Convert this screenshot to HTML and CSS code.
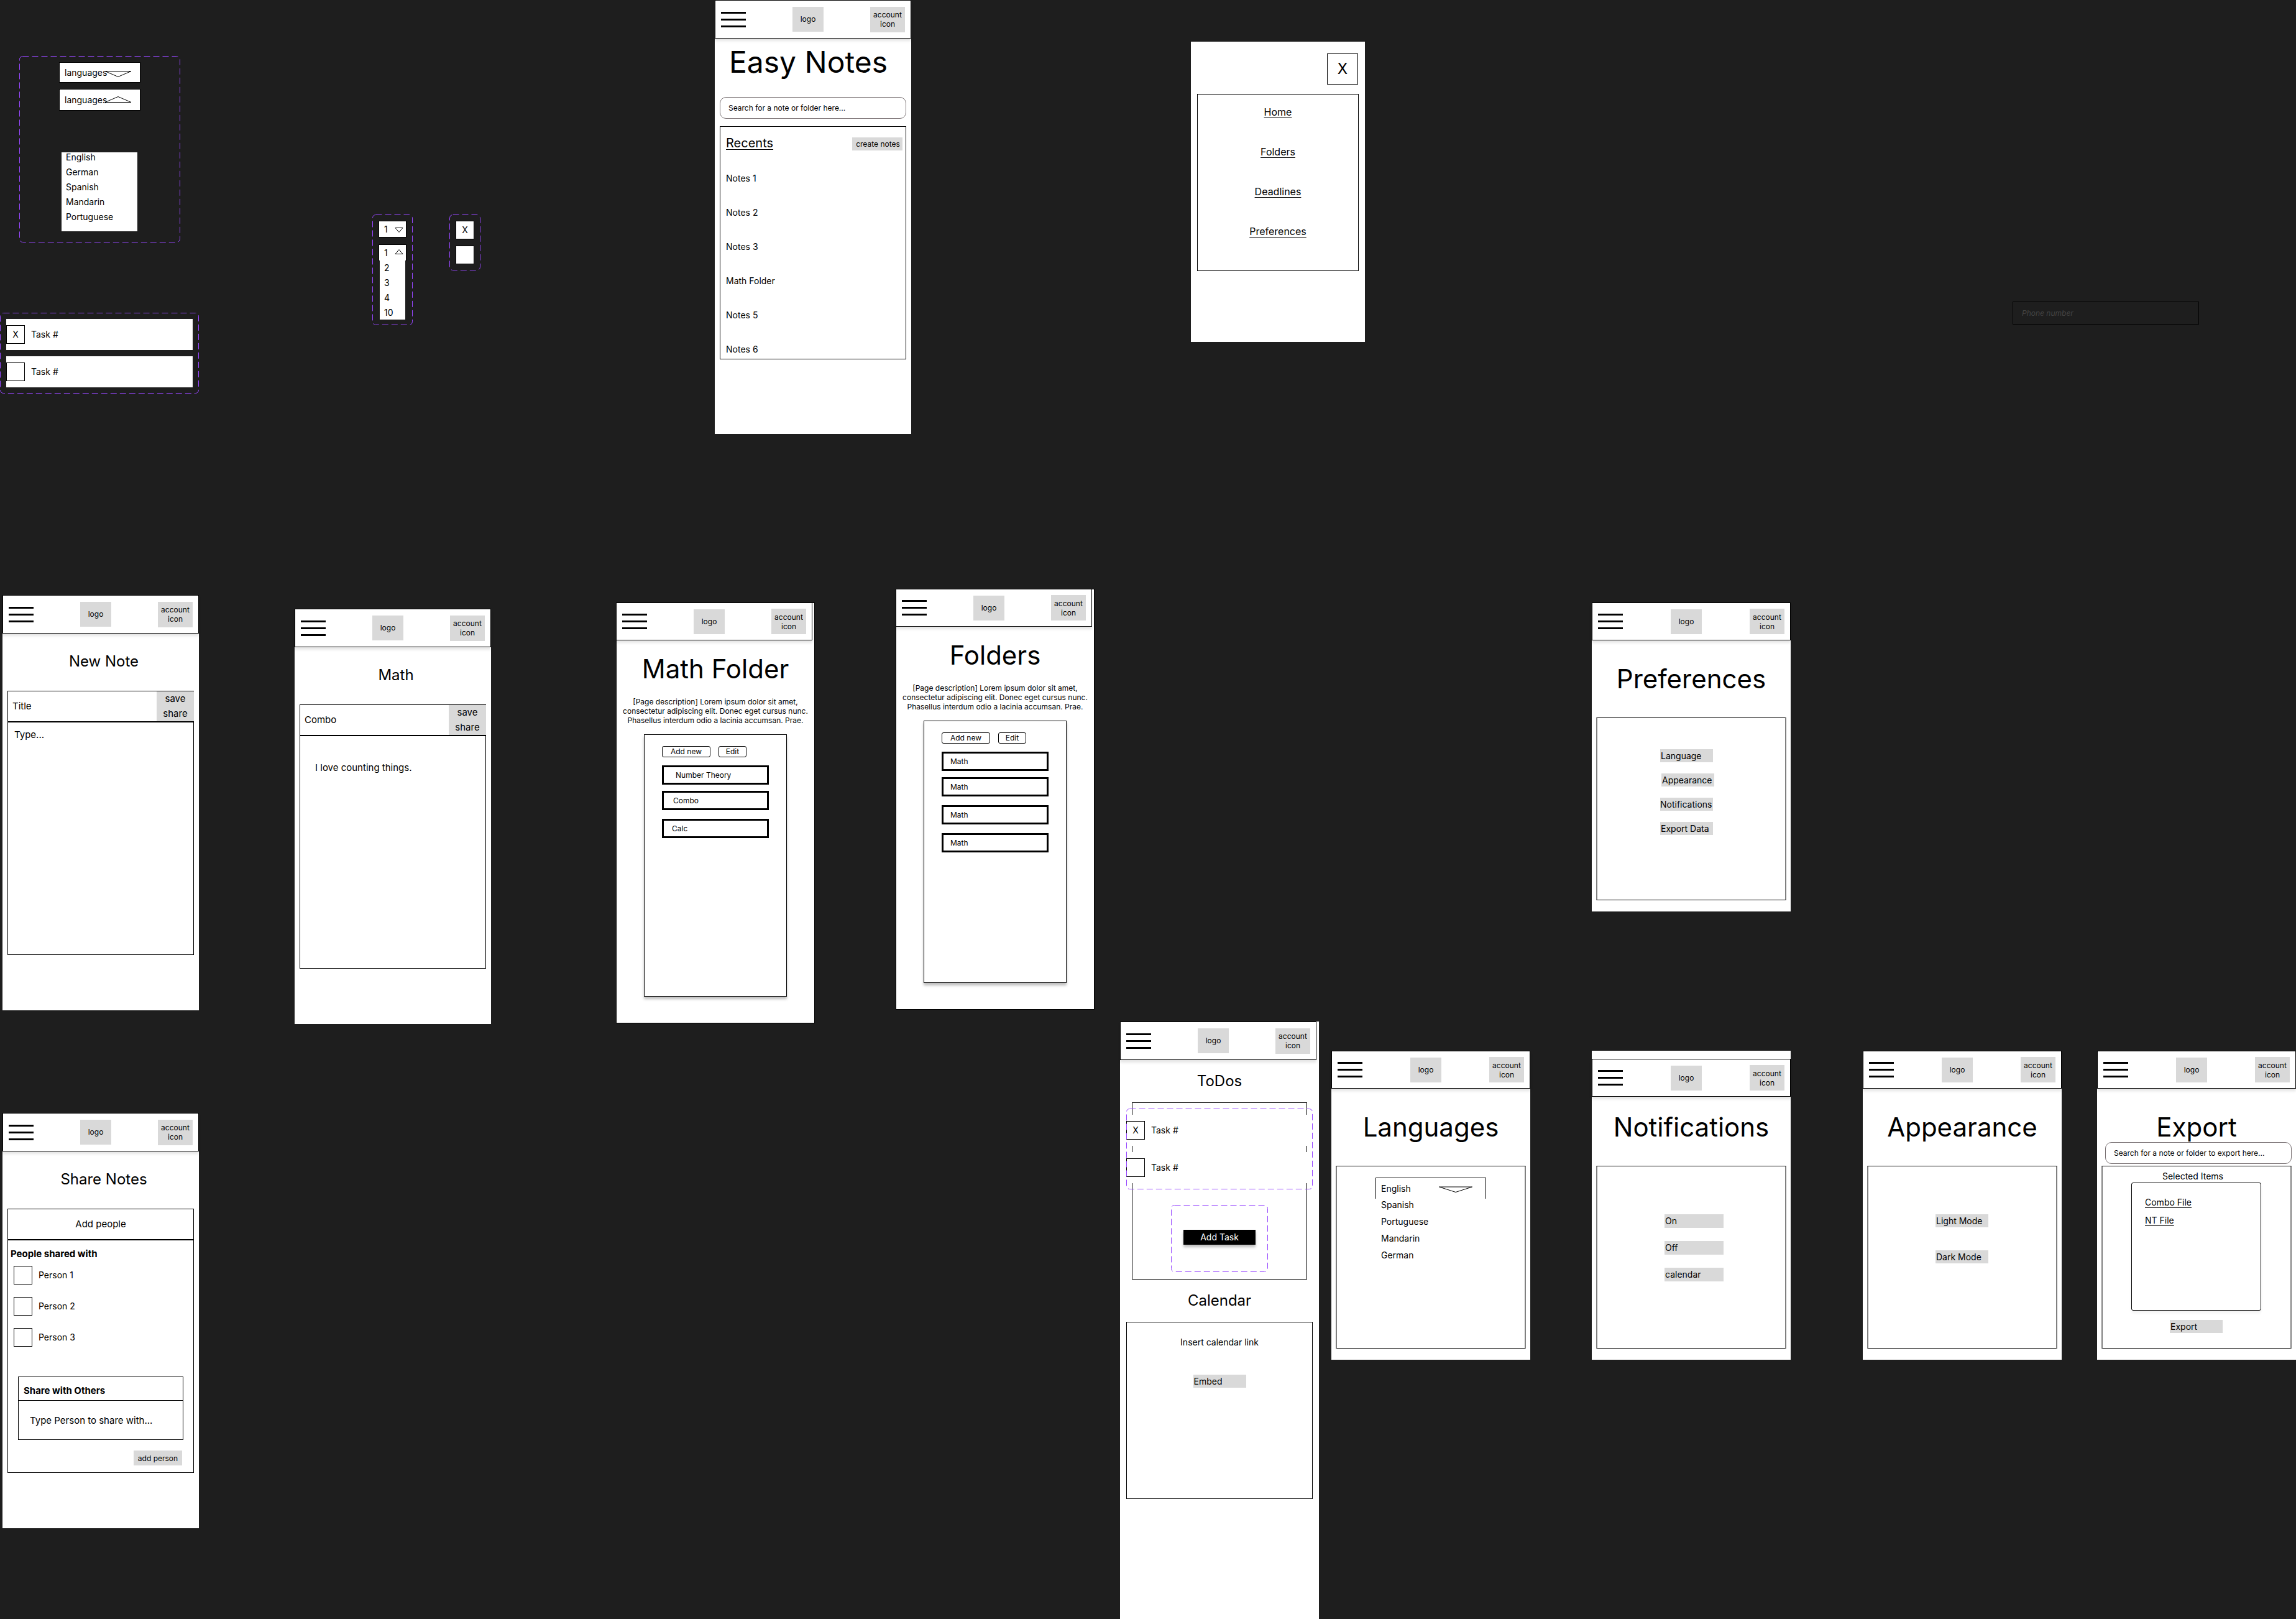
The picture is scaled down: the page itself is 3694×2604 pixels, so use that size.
FILE: index.html
```html
<!DOCTYPE html>
<html lang="en">
<head>
<meta charset="utf-8">
<title>Easy Notes wireframes</title>
<link rel="stylesheet" href="styles.css">
</head>
<body>
<svg class="defs" aria-hidden="true">
  <symbol id="menu" viewBox="0 0 40 25"><path d="M0 0h40v3H0zM0 11h40v3H0zM0 22h40v3H0z"/></symbol>
</svg>
<main class="canvas">

  <section class="component language-set">
    <svg class="dash"><rect rx="5"/></svg>
    <div class="dropdown">
      <select aria-label="Languages, closed"><option>languages</option></select>
      <svg class="caret wide" viewBox="0 0 42 10"><path d="M0 .5H42L21 9.500Z"/></svg>
    </div>
    <div class="dropdown tall">
      <select aria-label="Languages, open"><option>languages</option></select>
      <svg class="caret wide" viewBox="0 0 42 10"><path d="M0 9.500H42L21 .5Z"/></svg>
    </div>
    <ul class="options">
      <li>English</li><li>German</li><li>Spanish</li><li>Mandarin</li><li>Portuguese</li>
    </ul>
  </section>

  <section class="component task-set task-master">
    <svg class="dash"><rect rx="5"/></svg>
    <label class="task"><span class="check"><input type="checkbox" checked><span>X</span></span>Task #</label>
    <label class="task"><span class="check"><input type="checkbox"></span>Task #</label>
  </section>

  <section class="component number-set">
    <svg class="dash"><rect rx="5"/></svg>
    <div class="dropdown">
      <select aria-label="Count, closed"><option>1</option></select>
      <svg class="caret small" viewBox="0 0 14 8"><path d="M1 .5H13L7 7.500Z"/></svg>
    </div>
    <div class="dropdown">
      <select aria-label="Count, open"><option>1</option></select>
      <svg class="caret small raised" viewBox="0 0 14 8"><path d="M1 7.500H13L7 .5Z"/></svg>
    </div>
    <ul class="options"><li>2</li><li>3</li><li>4</li><li>10</li></ul>
  </section>

  <section class="component check-set">
    <svg class="dash"><rect rx="5"/></svg>
    <label class="check"><input type="checkbox" checked aria-label="Checked"><span>X</span></label>
    <label class="check"><input type="checkbox" aria-label="Unchecked"></label>
  </section>

  <article class="frame home">
    <header class="topbar">
      <button class="menu" aria-label="Menu"><svg><use href="#menu"/></svg></button>
      <a class="logo" href="#">logo</a>
      <button class="account">account icon</button>
    </header>
    <h1 class="display">Easy Notes</h1>
    <input class="search" type="text" aria-label="Search" placeholder="Search for a note or folder here...">
    <div class="panel">
      <div class="recents-head"><h2>Recents</h2><button class="chip">create notes</button></div>
      <ul class="recents">
        <li>Notes 1</li><li>Notes 2</li><li>Notes 3</li><li>Math Folder</li><li>Notes 5</li><li>Notes 6</li>
      </ul>
    </div>
  </article>

  <article class="frame nav-menu">
    <button class="close">X</button>
    <nav class="panel">
      <a href="#">Home</a><a href="#">Folders</a><a href="#">Deadlines</a><a href="#">Preferences</a>
    </nav>
  </article>

  <input class="phone" type="text" aria-label="Phone number" placeholder="Phone number">

  <article class="frame note new-note">
    <header class="topbar">
      <button class="menu" aria-label="Menu"><svg><use href="#menu"/></svg></button>
      <a class="logo" href="#">logo</a>
      <button class="account">account icon</button>
    </header>
    <h1 class="heading">New Note</h1>
    <div class="note-title">
      <input type="text" aria-label="Title" placeholder="Title">
      <div class="actions"><button>save</button><button>share</button></div>
    </div>
    <textarea class="note-body" aria-label="Note" placeholder="Type..."></textarea>
  </article>

  <article class="frame note math-note">
    <header class="topbar">
      <button class="menu" aria-label="Menu"><svg><use href="#menu"/></svg></button>
      <a class="logo" href="#">logo</a>
      <button class="account">account icon</button>
    </header>
    <h1 class="heading">Math</h1>
    <div class="note-title">
      <input type="text" aria-label="Title" value="Combo">
      <div class="actions"><button>save</button><button>share</button></div>
    </div>
    <textarea class="note-body filled" aria-label="Note">I love counting things.</textarea>
  </article>

  <article class="frame folder math-folder">
    <header class="topbar low narrow">
      <button class="menu" aria-label="Menu"><svg><use href="#menu"/></svg></button>
      <a class="logo" href="#">logo</a>
      <button class="account">account icon</button>
    </header>
    <h1 class="title">Math Folder</h1>
    <p class="description">[Page description] Lorem ipsum dolor sit amet, consectetur adipiscing elit. Donec eget cursus nunc. Phasellus interdum odio a lacinia accumsan. Prae.</p>
    <div class="panel raised-panel">
      <div class="tools"><button class="add">Add new</button><button class="edit">Edit</button></div>
      <div class="entries">
        <button class="indent-l">Number Theory</button>
        <button class="indent-m">Combo</button>
        <button class="indent-s">Calc</button>
      </div>
    </div>
  </article>

  <article class="frame folder folders">
    <header class="topbar low narrow">
      <button class="menu" aria-label="Menu"><svg><use href="#menu"/></svg></button>
      <a class="logo" href="#">logo</a>
      <button class="account">account icon</button>
    </header>
    <h1 class="title">Folders</h1>
    <p class="description">[Page description] Lorem ipsum dolor sit amet, consectetur adipiscing elit. Donec eget cursus nunc. Phasellus interdum odio a lacinia accumsan. Prae.</p>
    <div class="panel raised-panel">
      <div class="tools"><button class="add">Add new</button><button class="edit">Edit</button></div>
      <div class="entries">
        <button>Math</button><button>Math</button><button>Math</button><button>Math</button>
      </div>
    </div>
  </article>

  <article class="frame settings preferences">
    <header class="topbar low">
      <button class="menu" aria-label="Menu"><svg><use href="#menu"/></svg></button>
      <a class="logo" href="#">logo</a>
      <button class="account">account icon</button>
    </header>
    <h1 class="title">Preferences</h1>
    <div class="panel soft">
      <button class="option">Language</button>
      <button class="option inset">Appearance</button>
      <button class="option flush">Notifications</button>
      <button class="option">Export Data</button>
    </div>
  </article>

  <article class="frame note share-notes">
    <header class="topbar">
      <button class="menu" aria-label="Menu"><svg><use href="#menu"/></svg></button>
      <a class="logo" href="#">logo</a>
      <button class="account">account icon</button>
    </header>
    <h1 class="heading">Share Notes</h1>
    <h2 class="add-people">Add people</h2>
    <div class="people">
      <h3>People shared with</h3>
      <label class="task"><span class="check"><input type="checkbox"></span>Person 1</label>
      <label class="task"><span class="check"><input type="checkbox"></span>Person 2</label>
      <label class="task"><span class="check"><input type="checkbox"></span>Person 3</label>
      <div class="share-box">
        <h3><label for="person">Share with Others</label></h3>
        <input id="person" type="text" placeholder="Type Person to share with...">
      </div>
      <button class="chip">add person</button>
    </div>
  </article>

  <article class="frame todos">
    <header class="topbar narrow">
      <button class="menu" aria-label="Menu"><svg><use href="#menu"/></svg></button>
      <a class="logo" href="#">logo</a>
      <button class="account">account icon</button>
    </header>
    <h1 class="heading">ToDos</h1>
    <div class="panel todo-panel">
      <div class="task-set">
        <label class="task"><span class="check"><input type="checkbox" checked><span>X</span></span>Task #</label>
        <label class="task"><span class="check"><input type="checkbox"></span>Task #</label>
        <svg class="dash"><rect rx="5"/></svg>
      </div>
      <div class="add-task">
        <svg class="dash"><rect rx="5"/></svg>
        <button>Add Task</button>
      </div>
    </div>
    <h2 class="heading">Calendar</h2>
    <div class="panel calendar-panel">
      <p>Insert calendar link</p>
      <button class="option">Embed</button>
    </div>
  </article>

  <article class="frame settings languages">
    <header class="topbar low">
      <button class="menu" aria-label="Menu"><svg><use href="#menu"/></svg></button>
      <a class="logo" href="#">logo</a>
      <button class="account">account icon</button>
    </header>
    <h1 class="title">Languages</h1>
    <div class="panel soft">
      <div class="dropdown">
        <select aria-label="Language"><option>English</option></select>
        <svg class="caret broad" viewBox="0 0 56 10"><path d="M1.500 1H54.500L28 9.500Z"/></svg>
      </div>
      <ul class="options"><li>Spanish</li><li>Portuguese</li><li>Mandarin</li><li>German</li></ul>
    </div>
  </article>

  <article class="frame settings notifications">
    <header class="topbar low">
      <button class="menu" aria-label="Menu"><svg><use href="#menu"/></svg></button>
      <a class="logo" href="#">logo</a>
      <button class="account">account icon</button>
    </header>
    <h1 class="title">Notifications</h1>
    <div class="panel soft">
      <button class="option">On</button>
      <button class="option">Off</button>
      <button class="option">calendar</button>
    </div>
  </article>

  <article class="frame settings appearance">
    <header class="topbar low">
      <button class="menu" aria-label="Menu"><svg><use href="#menu"/></svg></button>
      <a class="logo" href="#">logo</a>
      <button class="account">account icon</button>
    </header>
    <h1 class="title">Appearance</h1>
    <div class="panel soft">
      <button class="option">Light Mode</button>
      <button class="option">Dark Mode</button>
    </div>
  </article>

  <article class="frame settings export">
    <header class="topbar low">
      <button class="menu" aria-label="Menu"><svg><use href="#menu"/></svg></button>
      <a class="logo" href="#">logo</a>
      <button class="account">account icon</button>
    </header>
    <h1 class="title">Export</h1>
    <input class="search" type="text" aria-label="Search" placeholder="Search for a note or folder to export here...">
    <div class="panel soft">
      <h2>Selected Items</h2>
      <div class="selected"><a href="#">Combo File</a><a href="#">NT File</a></div>
      <button class="option">Export</button>
    </div>
  </article>

</main>
</body>
</html>
```

FILE: styles.css
```css
* { box-sizing: border-box; }
body { margin: 0; background: #1e1e1e; }
h1, h2, h3, p, ul { margin: 0; padding: 0; font-weight: 400; }
ul { list-style: none; }
a { color: inherit; }
button, input, select, textarea {
  margin: 0; padding: 0; border: 0; border-radius: 0; background: none;
  font: inherit; color: inherit; appearance: none; outline: 0;
}
::placeholder { color: #000; opacity: 1; }
.defs { display: none; }

.canvas {
  position: relative; min-height: 100vh; overflow: hidden;
  font: 14px/20px Inter, "Liberation Sans", sans-serif; color: #000;
}

/* Artboards and components placed on the free canvas */
.frame, .component, .phone { position: absolute; }
.frame { display: flex; flex-direction: column; width: 316px; background: #fff; }
.language-set { left: 31px; top: 90px; width: 259px; height: 300px; }
.task-master { left: 0; top: 503px; width: 320px; }
.number-set { left: 599px; top: 345px; width: 65px; height: 178px; }
.check-set { left: 723px; top: 345px; width: 50px; height: 90px; }
.home { left: 1150px; top: 0; height: 698px; }
.nav-menu { left: 1916px; top: 67px; width: 280px; height: 483px; }
.phone { left: 3238px; top: 485px; }
.new-note { left: 4px; top: 957px; }
.math-note { left: 474px; top: 979px; }
.math-folder { left: 991px; top: 969px; }
.folders { left: 1441px; top: 947px; }
.preferences { left: 2561px; top: 969px; }
.share-notes { left: 4px; top: 1790px; }
.todos { left: 1802px; top: 1643px; bottom: 0; width: 320px; }
.languages { left: 2142px; top: 1690px; }
.notifications { left: 2561px; top: 1690px; }
.appearance { left: 2997px; top: 1690px; }
.export { left: 3374px; top: 1690px; }
.note { height: 668px; }
.folder { width: 320px; height: 677px; outline: 1px solid #000; outline-offset: -1px; }
.settings { width: 320px; height: 497px; }

/* Component set outline */
.dash { position: absolute; inset: 0; width: 100%; height: 100%; pointer-events: none; }
.dash rect {
  x: 0.5px; y: 0.5px; width: calc(100% - 1px); height: calc(100% - 1px);
  fill: none; stroke: #9747ff; stroke-dasharray: 10 5;
}

/* Top bar */
.topbar {
  display: flex; align-items: center; justify-content: space-between; flex: none;
  height: 62px; padding: 0 9px; border: 1px solid #000; background: #fff;
  box-shadow: 0 4px 4px rgba(0, 0, 0, 0.1);
  font-size: 12px; line-height: 15px; text-align: center;
}
.topbar.low { height: 61px; }
.topbar.narrow { width: 316px; }
.menu { width: 40px; height: 25px; }
.menu svg { display: block; width: 40px; height: 25px; }
.logo { width: 50px; height: 40px; line-height: 40px; background: #d9d9d9; text-decoration: none; }
.account { width: 56px; height: 41px; background: #d9d9d9; }

/* Headings */
.display { margin-top: 8px; padding-right: 15px; font-size: 48px; line-height: 60px; text-align: center; }
.title { margin-top: 38px; font-size: 42px; line-height: 48px; text-align: center; }
.heading { font-size: 24px; line-height: 30px; text-align: center; }

/* Shared parts */
.panel { display: flex; flex-direction: column; border: 1px solid #000; }
.search {
  flex: none; width: 300px; height: 35px; padding: 0 13px;
  border: 1px solid #7a7274; border-radius: 10px; font-size: 12px;
}
.chip { background: #d9d9d9; font-size: 12px; line-height: 21px; }
.option { width: 85px; height: 21px; padding: 0 1px; background: #d9d9d9; text-align: left; }
.check { display: grid; place-items: center; width: 30px; height: 30px; border: 1px solid #000; background: #fff; }
.check > * { grid-area: 1 / 1; }
.check input { width: 28px; height: 28px; }
.task-set { position: relative; display: flex; flex-direction: column; gap: 10px; padding: 10px 0; }
.task { display: flex; align-items: center; gap: 10px; }
.task-set .task { height: 50px; background: #fff; }
.task-master { padding: 10px; }
.dropdown { position: relative; border: 1px solid #000; background: #fff; }
.dropdown select { display: block; width: 100%; height: 100%; }
.caret { position: absolute; overflow: visible; fill: none; stroke: #000; pointer-events: none; }

/* Language selector component */
.language-set { padding: 10px 64px; }
.language-set .dropdown { width: 131px; height: 33px; margin-bottom: 10px; }
.language-set .dropdown.tall { height: 35px; }
.language-set select { padding-left: 8px; }
.caret.wide { left: 73px; top: 13px; width: 42px; height: 10px; }
.tall .caret.wide { top: 11px; }
.language-set .options { width: 122px; height: 127px; margin: 67px 0 0 4px; padding-left: 7px; background: #fff; }
.language-set li { height: 24px; line-height: 16px; }

/* Number selector component */
.number-set { padding: 10px; }
.number-set .dropdown { height: 27px; margin-bottom: 11px; }
.number-set .dropdown + .dropdown { margin-bottom: -1px; }
.number-set select { padding-left: 8px; }
.caret.small { left: 25px; top: 10px; width: 14px; height: 8px; }
.caret.raised { top: 7px; }
.number-set .options { position: relative; width: 41px; height: 95px; margin-left: 2px; padding-left: 7px; background: #fff; }
.number-set li { line-height: 24px; }
.check-set { display: flex; flex-direction: column; gap: 10px; padding: 10px; }

/* Home */
.home .search { margin: 26px 8px 0; }
.home .panel { margin: 12px 8px 0; padding: 17px 5px 5px 9px; gap: 35px; }
.recents-head { display: flex; justify-content: space-between; }
.recents-head h2 { font-size: 20px; line-height: 18px; text-decoration: underline; text-decoration-thickness: 1px; text-underline-offset: 3px; }
.recents-head .chip { width: 81px; height: 21px; padding-left: 2px; }
.recents { display: flex; flex-direction: column; gap: 35px; }

/* Navigation menu */
.close { width: 50px; height: 50px; margin: 19px 11px 15px auto; border: 1px solid #000; font-size: 24px; }
.nav-menu .panel { height: 285px; margin: 0 10px; padding-top: 18px; align-items: center; gap: 44px; font-size: 16px; }
.nav-menu a { text-underline-offset: 3px; text-decoration-thickness: 1px; }

.phone { width: 300px; height: 37px; padding: 0 14px; border: 1px solid #000; font-size: 12px; font-style: italic; }
.phone::placeholder { color: #444; }

/* Note editor */
.note { font-size: 15px; }
.note .heading { margin-top: 30px; padding-left: 10px; }
.note-title { display: flex; height: 50px; margin: 32px 8px 0; border: 1px solid #000; border-right: 0; }
.note-title input { flex: 1; min-width: 0; padding-left: 7px; }
.actions { display: flex; flex-direction: column; width: 60px; background: #d9d9d9; }
.actions button { height: 24px; }
.note-body { display: block; height: 375px; margin: 0 8px; padding: 10px; border: 1px solid #000; resize: none; }
.note-body.filled { padding: 41px 24px; }

/* Share notes */
.add-people { height: 50px; margin: 32px 8px 0; border: 1px solid #000; font-size: 15px; line-height: 48px; text-align: center; }
.people { display: flex; flex-direction: column; gap: 20px; height: 375px; margin: 0 8px; padding: 12px 16px 0 9px; border: 1px solid #000; }
.people h3 { font-size: 15px; font-weight: 700; }
.people > h3 { margin: 0 0 -11px -5px; }
.people .task { font-size: 14px; }
.share-box { width: 266px; height: 102px; margin: 28px 0 0 7px; border: 1px solid #000; }
.share-box h3 { height: 38px; padding: 12px 8px 0; line-height: 20px; border-bottom: 1px solid #000; }
.share-box input { width: 100%; height: 62px; padding-left: 18px; }
.people .chip { align-self: flex-end; width: 78px; height: 24px; margin: -3px 2px 0 0; }

/* Folder pages */
.folder .title { margin-top: 22px; }
.description { margin: 21px 10px 0; font-size: 12px; line-height: 15px; text-align: center; }
.raised-panel { height: 422px; margin: 15px 45px 0; padding: 18px 28px; background: #fff; box-shadow: 0 4px 4px rgba(0, 0, 0, 0.25); font-size: 12px; }
.tools { display: flex; gap: 13px; }
.tools button { height: 18px; border: 1px solid #000; border-radius: 3px; line-height: 16px; }
.tools .add { width: 78px; }
.tools .edit { width: 45px; }
.entries { display: flex; flex-direction: column; gap: 14px; margin-top: 13px; }
.entries button { height: 31px; padding-left: 11px; border: 3px solid #000; text-align: left; }
.entries button:first-child { margin-bottom: -4px; }
.entries .indent-l { padding-left: 19px; }
.entries .indent-m { padding-left: 15px; }
.entries .indent-s { padding-left: 13px; }

/* Settings pages */
.soft { height: 294px; margin: 38px 7px 0; border-left: 2px solid #808080; border-right: 2px solid #808080; }
.preferences .soft { gap: 18px; padding: 50px 101px; }
.option.inset { margin-left: 2px; }
.option.flush { padding: 0; }
.languages .soft { padding: 18px 62px; }
.languages .dropdown { width: 178px; height: 34px; border-bottom: 0; }
.languages select { padding-left: 8px; }
.caret.broad { left: 100px; top: 13px; width: 56px; height: 10px; }
.languages .options { display: flex; flex-direction: column; gap: 7px; padding-left: 9px; }
.notifications { padding-top: 13px; }
.notifications .title { margin-top: 25px; }
.notifications .soft { gap: 21px; padding: 77px 108px; }
.notifications .option { width: 95px; height: 22px; }
.appearance .soft { gap: 37px; padding: 77px 108px; }
.export .search { margin-left: 13px; }
.export .soft { margin-top: 3px; padding-top: 6px; }
.export h2 { padding-right: 12px; font-size: 14px; text-align: center; }
.selected {
  display: flex; flex-direction: column; align-items: flex-start; gap: 9px;
  width: 209px; height: 206px; margin-left: 46px; padding: 21px;
  border: 1px solid #000; border-radius: 3px; box-shadow: 0 4px 4px rgba(0, 0, 0, 0.05);
}
.selected a { text-underline-offset: 3px; text-decoration-thickness: 1px; }
.export .option { margin: 15px 0 0 108px; }

/* To-dos */
.todos .heading { margin-top: 19px; }
.todo-panel { height: 285px; margin: 19px 19px 0; padding-top: 9px; }
.todo-panel .task-set { margin: 0 -10px; }
.add-task { position: relative; width: 156px; height: 108px; margin: 25px auto 0; padding: 40px 20px; }
.add-task button { display: block; width: 116px; height: 24px; background: #000; color: #fff; box-shadow: 0 4px 4px rgba(0, 0, 0, 0.25); }
.calendar-panel { height: 285px; margin: 19px 10px 0; padding-top: 22px; align-items: center; gap: 42px; }
```
